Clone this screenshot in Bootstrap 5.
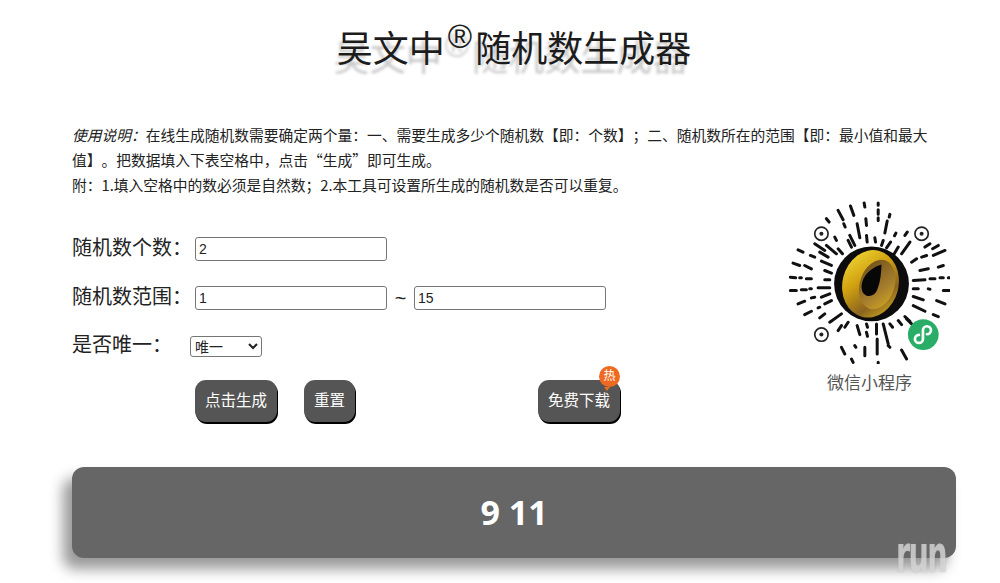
<!DOCTYPE html>
<html lang="zh-CN">
<head>
    <meta charset="UTF-8">
    <meta name="viewport" content="width=device-width, initial-scale=1.0">
    <title>吴文中随机数生成器</title>
    <link href="https://cdn.jsdelivr.net/npm/bootstrap@5.3.0/dist/css/bootstrap.min.css" rel="stylesheet">
    <style>
        body {
            font-family: "Liberation Sans", "Noto Sans CJK SC", sans-serif;
            color: #222;
            background: #fff;
        }
        .page-wrap {
            position: relative;
            height: 583px;
            padding: 0 44px 0 72px;
            overflow: hidden;
        }
        .page-title {
            margin: 0;
            padding-top: 26px;
            height: 122px;
            text-align: center;
            font-size: 36px;
            line-height: 48px;
            font-weight: 400;
            color: #1c1c1c;
            text-shadow: -3px 9px 3px #c8c8c8;
        }
        .page-title sup {
            top: -.42em;
            margin: 0 3px 0 3px;
            font-size: 33px;
            line-height: 0;
        }
        .intro {
            margin: 0;
            font-family: "Noto Sans CJK SC", "Liberation Sans", sans-serif;
            font-size: 14.75px;
            line-height: 25px;
            width: 860px;
            text-spacing-trim: space-all;
        }
        .form-area {
            width: 650px;
            padding-top: 40px;
        }
        .form-line {
            display: flex;
            align-items: center;
            font-size: 20px;
            line-height: 26px;
            margin-bottom: 24px;
        }
        .line-label {
            width: 123px;
            flex: none;
            margin-top: -3px;
        }
        .num-input {
            width: 192px;
            height: 24px;
            padding: 1px 3px;
            border: 1px solid #767676;
            border-radius: 3px;
            font-family: "Liberation Sans", sans-serif;
            font-size: 14px;
            color: #222;
        }
        .range-sep {
            width: 27px;
            text-align: center;
            font-size: 20px;
        }
        .unique-select {
            width: 72px;
            height: 21px;
            margin-left: -5px;
            padding: 0;
            font-size: 14px;
            border: 1px solid #767676;
            border-radius: 3px;
            background: #fff;
            color: #222;
        }
        .btn-row {
            display: flex;
            margin: -2px 0 0 123px;
        }
        .dark-btn {
            position: relative;
            height: 42px;
            padding: 0 10px;
            font-size: 15.5px;
            color: #fff;
            background: #555;
            border: 0;
            border-radius: 11px;
            box-shadow: 1px 2px 0 #000;
            white-space: nowrap;
        }
        .dark-btn:hover {
            color: #fff;
            background: #555;
        }
        .reset-btn {
            margin-left: 27px;
        }
        .download-btn {
            margin-left: 183px;
        }
        .hot-tag {
            position: absolute;
            top: -14px;
            right: 0;
            width: 21px;
            height: 21px;
            border-radius: 50%;
            background: #ee6a20;
            color: #fff;
            font-size: 12px;
            line-height: 20px;
            text-align: center;
        }
        .hot-tag::after {
            content: "";
            position: absolute;
            left: 5px;
            bottom: -4px;
            border: 3px solid transparent;
            border-top: 4px solid #ee6a20;
            border-bottom: 0;
        }
        .mini-code {
            position: absolute;
            left: 787px;
            top: 197px;
            width: 176px;
            color: #555;
            font-size: 17px;
            line-height: 22px;
        }
        .mini-code svg {
            display: block;
            width: 167px;
            height: 167px;
            margin-left: -4px;
            filter: blur(.4px);
        }
        .mini-name {
            display: block;
            margin: 9px 0 0 40px;
        }
        .result-box {
            position: absolute;
            left: 72px;
            top: 467px;
            width: 884px;
            height: 91px;
            background: #666;
            border-radius: 12px;
            box-shadow: -9px 11px 14px #999;
            color: #fff;
            font-family: "Open Sans", sans-serif;
            font-size: 34px;
            font-weight: 700;
            line-height: 91px;
            text-align: center;
        }
        .run-mark {
            position: absolute;
            left: 896px;
            top: 524px;
            font-family: "DejaVu Sans", sans-serif;
            font-size: 52px;
            font-weight: 700;
            line-height: 60px;
            letter-spacing: -3px;
            color: rgba(222, 222, 222, .72);
            text-shadow: 0 0 2px rgba(150, 150, 150, .5);
            transform: scaleX(.55);
            transform-origin: left top;
        }
    </style>
</head>
<body>
    <div class="page-wrap">
        <h1 class="page-title">吴文中<sup>®</sup>随机数生成器</h1>
        <p class="intro"><em>使用说明&#xFF1A;</em>在线生成随机数需要确定两个量&#xFF1A;一、需要生成多少个随机数【即&#xFF1A;个数】&#xFF1B;二、随机数所在的范围【即&#xFF1A;最小值和最大值】。把数据填入下表空格中&#xFF0C;点击“生成”即可生成。<br>附&#xFF1A;1.填入空格中的数必须是自然数&#xFF1B;2.本工具可设置所生成的随机数是否可以重复。</p>

        <div class="form-area">
            <div class="form-line">
                <label class="line-label" for="count-input">随机数个数&#xFF1A;</label>
                <input id="count-input" class="num-input" type="text" value="2">
            </div>
            <div class="form-line">
                <label class="line-label" for="min-input">随机数范围&#xFF1A;</label>
                <input id="min-input" class="num-input" type="text" value="1">
                <span class="range-sep">~</span>
                <input id="max-input" class="num-input" type="text" value="15">
            </div>
            <div class="form-line">
                <label class="line-label" for="unique-select">是否唯一&#xFF1A;</label>
                <select id="unique-select" class="unique-select">
                    <option>唯一</option>
                    <option>可重复</option>
                </select>
            </div>
            <div class="btn-row">
                <button type="button" class="btn dark-btn">点击生成</button>
                <button type="button" class="btn dark-btn reset-btn">重置</button>
                <button type="button" class="btn dark-btn download-btn">免费下载<span class="hot-tag">热</span></button>
            </div>
        </div>

        <div class="mini-code">
            <svg viewBox="40 20 500 500" xmlns="http://www.w3.org/2000/svg">
                <defs>
                    <linearGradient id="goldFill" x1="0" y1="0" x2="1" y2="1">
                        <stop offset="0" stop-color="#f7e23c"/>
                        <stop offset=".4" stop-color="#d0a010"/>
                        <stop offset=".7" stop-color="#8a6420"/>
                        <stop offset="1" stop-color="#e6bd1c"/>
                    </linearGradient>
                    <linearGradient id="innerFill" x1="0" y1="0" x2="1" y2="1">
                        <stop offset="0" stop-color="#6a4c1a"/>
                        <stop offset=".6" stop-color="#a47c2c"/>
                        <stop offset="1" stop-color="#d8ac24"/>
                    </linearGradient>
                </defs>
                <path fill="none" stroke="#111" stroke-width="9" stroke-linecap="round" d="
                    M170 85L178 95M205 60L220 88M242 47L252 75M283 38L285 50M325 38L325 45M325 58L325 72M325 82L325 90M360 72L358 80M352 92L345 128
                    M288 85L290 105M262 100L270 142M222 100L226 110M378 128L374 136M412 125L405 135M195 140L200 150M240 135L255 165M290 135L292 155M315 142L317 155M340 150L335 165M362 155L350 172M385 170L370 195M420 155L395 190
                    M135 160L165 180M170 165L200 190M205 175L218 190M235 150L245 170
                    M85 178L100 185M122 195L135 200M150 185L175 200M70 218L90 225M105 225L125 235M155 212L185 225M165 240L185 248
                    M62 260L78 262M90 262L95 262M110 265L125 265M165 268L180 268M62 300L80 300M95 298L110 298M120 295L125 295M145 292L180 292
                    M85 340L105 332M125 322L135 320M155 320L180 310M165 340L185 330M105 372L125 362M145 352L150 350M150 382L165 370M180 395L215 370
                    M488 175L505 165M465 170L480 160M455 200L470 195M490 195L525 180M425 215L440 205M505 230L520 225M450 240L475 235M430 270L465 268M480 265L495 265M510 262L520 262M535 262L548 262
                    M520 300L548 300M475 295L480 296M430 318L460 328M500 330L525 340M430 345L465 362M490 372L505 378M410 385L425 400M430 295L445 295
                    M215 470L225 490M245 505L250 515M255 465L258 470M285 470L285 495M322 445L322 490M325 515L325 522M395 478L410 505M355 465L360 470
                    M215 405L205 420M235 395L225 410M262 405L270 432M290 400L293 410M290 425L293 437M320 400L320 430M340 400L355 460M360 400L368 410M385 390L395 402M405 378L420 392"/>
                <g fill="none" stroke="#222" stroke-width="5">
                    <circle cx="155" cy="130" r="20"/>
                    <circle cx="455" cy="130" r="20"/>
                    <circle cx="155" cy="432" r="20"/>
                </g>
                <g fill="#222">
                    <circle cx="155" cy="130" r="6"/>
                    <circle cx="455" cy="130" r="6"/>
                    <circle cx="155" cy="432" r="6"/>
                </g>
                <circle cx="305" cy="280" r="112" fill="#0c0c0c"/>
                <ellipse cx="302" cy="280" rx="84" ry="102" transform="rotate(14 302 280)" fill="url(#goldFill)"/>
                <ellipse cx="322" cy="282" rx="52" ry="76" transform="rotate(18 322 282)" fill="url(#innerFill)"/>
                <path fill="#070707" d="M335 222C300 232 272 262 276 296C280 322 312 324 322 298C332 274 334 246 335 222Z"/>
                <circle cx="460" cy="432" r="46" fill="#2aae67"/>
                <path fill="none" stroke="#fff" stroke-width="8" stroke-linecap="round" d="M447 433a12 12 0 1 0 12 12v-26a12 12 0 1 1 12 12"/>
            </svg>
            <span class="mini-name">微信小程序</span>
        </div>

        <div class="result-box">9 11</div>
        <span class="run-mark">run</span>
    </div>

    <script src="https://cdn.jsdelivr.net/npm/bootstrap@5.3.0/dist/js/bootstrap.bundle.min.js"></script>
</body>
</html>
